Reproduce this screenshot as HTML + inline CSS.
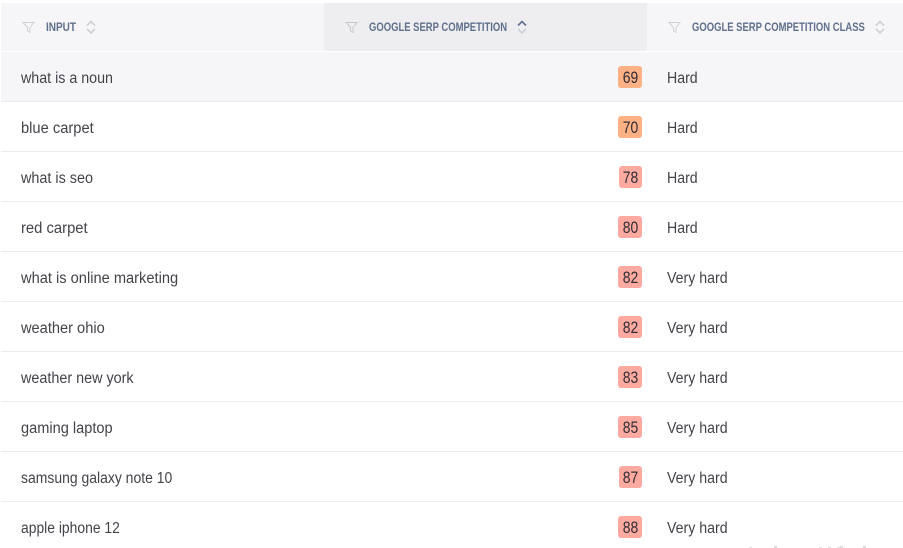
<!DOCTYPE html>
<html><head><meta charset="utf-8">
<style>
html,body{margin:0;padding:0;background:#fff;width:903px;height:548px;overflow:hidden;font-family:"Liberation Sans",sans-serif}
.a{position:absolute;white-space:nowrap}
.t{font-size:15.5px;color:#43434a;line-height:20px;transform-origin:0 50%;margin-top:1px}
.h{font-size:11.5px;font-weight:bold;color:#5f6f8c;line-height:14px;transform-origin:0 50%;top:21px}
.b{height:22px;left:618px;width:24px;border-radius:3px;text-align:center;line-height:23px;font-size:17px;color:#2c2c34;background:#ffaaa0}
.b span{display:inline-block;transform:scaleX(.82)}
.o{background:#ffb186}
.l{left:1px;width:902px;height:1px;background:#ececef}
.d{width:3px;height:1px;background:#dcdcde}
svg{position:absolute}
</style></head><body>
<div class="a" style="left:1px;top:3px;width:902px;height:48px;background:#f6f6f9"></div>
<div class="a" style="left:324px;top:3px;width:323px;height:48px;background:#eeeef1"></div>
<div class="a" style="left:1px;top:52px;width:902px;height:49px;background:#f6f6f9"></div>

<svg style="left:22px;top:21px" width="13" height="13" viewBox="0 0 13 13" fill="none" stroke="#cfd1d6"><path d="M1 1.5h11L8 6.5V11.5L5.5 10V6.5z"/></svg>
<svg style="left:345px;top:21px" width="13" height="13" viewBox="0 0 13 13" fill="none" stroke="#c6c8cd"><path d="M1 1.5h11L8 6.5V11.5L5.5 10V6.5z"/></svg>
<svg style="left:668px;top:21px" width="13" height="13" viewBox="0 0 13 13" fill="none" stroke="#cfd1d6"><path d="M1 1.5h11L8 6.5V11.5L5.5 10V6.5z"/></svg>

<div class="a h" style="left:46px;transform:scaleX(.87)">INPUT</div>
<div class="a h" style="left:369px;transform:scaleX(.823)">GOOGLE SERP COMPETITION</div>
<div class="a h" style="left:692px;transform:scaleX(.823)">GOOGLE SERP COMPETITION CLASS</div>

<svg style="left:85px;top:19px" width="12" height="16" viewBox="0 0 12 16" fill="none" stroke="#cfd1d6" stroke-width="1.6"><path d="M2 6.5L6 2.5L10 6.5M2 10L6 14L10 10"/></svg>
<svg style="left:516px;top:19px" width="12" height="16" viewBox="0 0 12 16" fill="none" stroke-width="1.6"><path d="M2 6.5L6 2.5L10 6.5" stroke="#5f6f8c"/><path d="M2 10L6 14L10 10" stroke="#cfd1d6"/></svg>
<svg style="left:874px;top:19px" width="12" height="16" viewBox="0 0 12 16" fill="none" stroke="#cfd1d6" stroke-width="1.6"><path d="M2 6.5L6 2.5L10 6.5M2 10L6 14L10 10"/></svg>

<div class="a l" style="top:101px"></div>
<div class="a l" style="top:151px"></div>
<div class="a l" style="top:201px"></div>
<div class="a l" style="top:251px"></div>
<div class="a l" style="top:301px"></div>
<div class="a l" style="top:351px"></div>
<div class="a l" style="top:401px"></div>
<div class="a l" style="top:451px"></div>
<div class="a l" style="top:501px"></div>

<div class="a t" style="left:21px;top:68px;transform:scaleX(.92)">what is a noun</div>
<div class="a t" style="left:21px;top:118px;transform:scaleX(.948)">blue carpet</div>
<div class="a t" style="left:21px;top:168px;transform:scaleX(.928)">what is seo</div>
<div class="a t" style="left:21px;top:218px;transform:scaleX(.955)">red carpet</div>
<div class="a t" style="left:21px;top:268px;transform:scaleX(.945)">what is online marketing</div>
<div class="a t" style="left:21px;top:318px;transform:scaleX(.943)">weather ohio</div>
<div class="a t" style="left:21px;top:368px;transform:scaleX(.927)">weather new york</div>
<div class="a t" style="left:21px;top:418px;transform:scaleX(.941)">gaming laptop</div>
<div class="a t" style="left:21px;top:468px;transform:scaleX(.90)">samsung galaxy note 10</div>
<div class="a t" style="left:21px;top:518px;transform:scaleX(.896)">apple iphone 12</div>

<div class="a b o" style="top:66px"><span>69</span></div>
<div class="a b o" style="top:116px"><span>70</span></div>
<div class="a b" style="top:166px;left:619px;width:23px"><span>78</span></div>
<div class="a b" style="top:216px"><span>80</span></div>
<div class="a b" style="top:266px"><span>82</span></div>
<div class="a b" style="top:316px"><span>82</span></div>
<div class="a b" style="top:366px"><span>83</span></div>
<div class="a b" style="top:416px"><span>85</span></div>
<div class="a b" style="top:466px;left:619px;width:23px"><span>87</span></div>
<div class="a b" style="top:516px"><span>88</span></div>

<div class="a t" style="left:667px;top:68px;transform:scaleX(.913)">Hard</div>
<div class="a t" style="left:667px;top:118px;transform:scaleX(.913)">Hard</div>
<div class="a t" style="left:667px;top:168px;transform:scaleX(.913)">Hard</div>
<div class="a t" style="left:667px;top:218px;transform:scaleX(.913)">Hard</div>
<div class="a t" style="left:667px;top:268px;transform:scaleX(.913)">Very hard</div>
<div class="a t" style="left:667px;top:318px;transform:scaleX(.913)">Very hard</div>
<div class="a t" style="left:667px;top:368px;transform:scaleX(.913)">Very hard</div>
<div class="a t" style="left:667px;top:418px;transform:scaleX(.913)">Very hard</div>
<div class="a t" style="left:667px;top:468px;transform:scaleX(.913)">Very hard</div>
<div class="a t" style="left:667px;top:518px;transform:scaleX(.913)">Very hard</div>

<div class="a d" style="left:749px;top:547px"></div>
<div class="a d" style="left:774px;top:546px;height:2px"></div>
<div class="a d" style="left:819px;top:547px"></div>
<div class="a d" style="left:828px;top:547px"></div>
<div class="a d" style="left:837px;top:547px"></div>
<div class="a d" style="left:840px;top:546px;height:2px"></div>
<div class="a d" style="left:863px;top:546px;height:2px"></div>
</body></html>
